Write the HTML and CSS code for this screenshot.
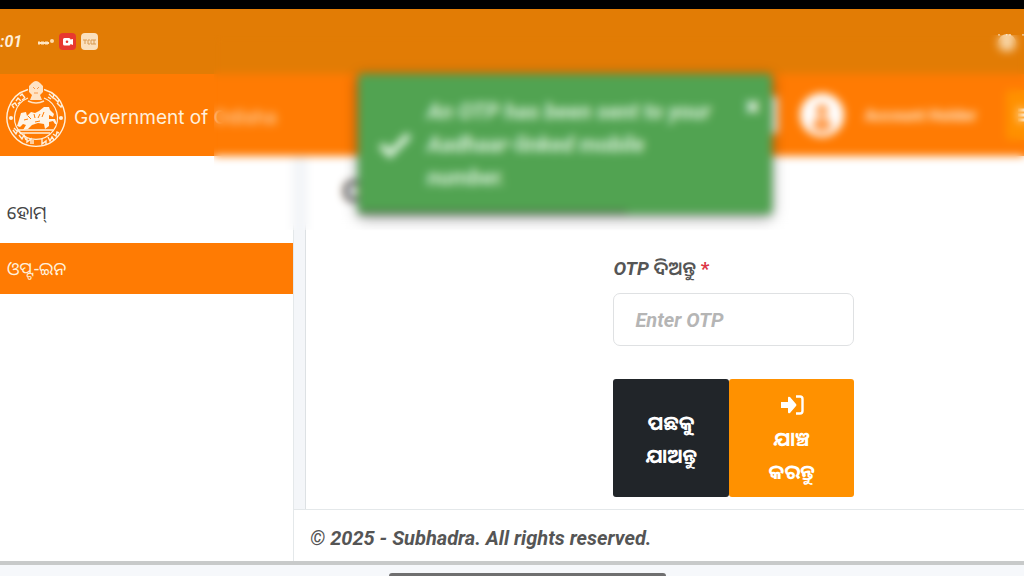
FILE: index.html
```html
<!DOCTYPE html>
<html lang="or">
<head>
    <meta charset="UTF-8">
    <meta name="viewport" content="width=device-width, initial-scale=1.0">
    <title>Subhadra</title>
    <link rel="stylesheet" href="styles.css">
</head>
<body>
    <!-- Phone status bar -->
    <div class="status-bar">
        <span class="clock">:01</span>
        <svg class="net" viewBox="0 0 17 10" width="17" height="10">
            <path d="M1 6h2M4 6h3M8 6h3" stroke="#ffe6c4" stroke-width="3"/>
            <path d="M1 6h11" stroke="#ffe6c4" stroke-width="2"/>
            <circle cx="15" cy="4" r="2" fill="#ffdcae"/>
        </svg>
        <span class="app-icon rec">
            <svg viewBox="0 0 10 8" width="10" height="8">
                <path d="M1.500 0h4.500a1.500 1.500 0 0 1 1.500 1.500L10 1v6L7.500 6A1.500 1.500 0 0 1 6 7.500H1.500A1.500 1.500 0 0 1 0 6V1.500A1.500 1.500 0 0 1 1.500 0z" fill="#fff"/>
                <circle cx="4" cy="3.800" r="1.300" fill="#e8382f"/>
            </svg>
        </span>
        <span class="app-icon count">
            <svg viewBox="0 0 13 6" width="13" height="6">
                <path d="M0 1h4M2 1v4M5 1v4M8 1v4M11 1v4M5 5h2M5 1h2M8 5h5M8 1h5" stroke="#d99a50" stroke-width="1" fill="none"/>
            </svg>
        </span>
        <svg class="signal" viewBox="0 0 28 18" width="28" height="18">
            <circle cx="11" cy="10" r="9" fill="#f8d4a4"/>
            <path d="M2 2h2M10 2h1M13 2h2M26 2h2" stroke="#fff" stroke-width="1"/>
        </svg>
    </div>

    <!-- Site header -->
    <header class="header">
        <svg class="emblem" viewBox="0 0 60 68" width="60" height="68">
            <g fill="none" stroke="#fff0dc">
                <path d="M22 8.500A29 29 0 1 0 38 8.500" stroke-width="1.400"/>
                <path d="M22 17A21.500 21.500 0 1 0 38 17" stroke-width="1.200"/>
                <path d="M8 27l-2-3 3-2 2 3M10 20l2-3 3 3M14 15l2-2 3 4M16 19l3-2M12 23l2-2" stroke-width="1.400"/>
                <path d="M43 13l4 4 1-4M48 17l4 4 1-3M51 22l4 4 1-2M42 16l3 2" stroke-width="1.400"/>
                <path d="M7 49l3 4 2-4 3 4M13 54l3 4 2-4 2 5M21 57v4l4-3v5M27 59v4M8 47l3 3" stroke-width="1.400"/>
                <path d="M36 58v5l4-3v3M42 56l2 4 2-4 2 3M47 53l3 2 1-4 2 1" stroke-width="1.400"/>
            </g>
            <circle cx="5" cy="37" r="2" fill="#fff0dc"/>
            <circle cx="55" cy="37" r="2" fill="#fff0dc"/>
            <path d="M26 2q4-4 8 0l3 3v6l-3 3 2 5H24l2-5-3-3V5z" fill="#ffe3c4"/>
            <path d="M27 6l2 2M33 6l-2 2M28 12h4" stroke="#f79a4a" fill="none"/>
            <path d="M22 20q8 4 16 0" stroke="#ffe3c4" stroke-width="1.500" fill="none"/>
            <path d="M15 32l5-1 1 4 4-4 4 1 4-2 5-4 5 0 1 3 4 4-1 3-4-2 0 4 6 0 2 5-2 0-2-3-4 1 0 4-4 3-1-5-6-1-6 2-4 4-5 1 3-5-3-1-3 3-3-1 2-6z" fill="#fff4e6"/>
            <path d="M22 35l3 3M28 33l1 4M34 33l-2 4M18 39l4-1M38 31l-2 5M29 41l5-1" stroke="#ff7b03" fill="none"/>
            <path d="M12 49h35M15 52h29" stroke="#fff0dc" stroke-width="1.500"/>
        </svg>
        <span class="brand">Government of <b>Odisha</b></span>
        <div class="header-right">
            <button class="lang" type="button" aria-label="Language"></button>
            <svg class="avatar" viewBox="0 0 44 44" width="44" height="44">
                <circle cx="22" cy="22" r="22" fill="#fff"/>
                <circle cx="22" cy="17" r="6" fill="#ff9b4b"/>
                <path d="M12 34q2-10 10-10t10 10q-5 5-10 5t-10-5z" fill="#ff9b4b"/>
            </svg>
            <span class="user">Account Holder</span>
            <button class="more" type="button" aria-label="Menu">
                <svg viewBox="0 0 6 14" width="6" height="14"><path d="M0 2h6M0 7h6M0 12h6" stroke="#fff" stroke-width="3"/></svg>
            </button>
        </div>
    </header>

    <!-- Sidebar, form and footer -->
    <div class="wrapper">
        <nav class="sidebar">
            <a href="#">ହୋମ୍</a>
            <a href="#" class="active">ଓପ୍ଟ-ଇନ</a>
        </nav>
        <div class="page">
            <main class="content">
                <h1>OTP</h1>
                <form class="otp-form">
                    <label for="otp"><i>OTP</i> ଦିଅନ୍ତୁ <span class="required">*</span></label>
                    <input type="text" id="otp" placeholder="Enter OTP">
                    <div class="buttons">
                        <button type="button" class="btn back">ପଛକୁ ଯାଅନ୍ତୁ</button>
                        <button type="submit" class="btn verify">
                            <svg viewBox="0 0 24 20" width="24" height="20">
                                <path d="M1 7h7V3q0-2 2-1l6 7q1 1 0 2l-6 7q-2 1-2-1v-4H1z" fill="#fff"/>
                                <path d="M16 1.500h4a2.500 2.500 0 0 1 2.500 2.500v12a2.500 2.500 0 0 1-2.500 2.500h-4" fill="none" stroke="#fff" stroke-width="2.400"/>
                            </svg>
                            <span>ଯାଞ୍ଚ କରନ୍ତୁ</span>
                        </button>
                    </div>
                </form>
            </main>
            <footer class="footer">© 2025 - Subhadra. All rights reserved.</footer>
        </div>
    </div>

    <!-- Navigation handle -->
    <div class="nav-area"><div class="handle"></div></div>

    <div class="toast" role="alert">
        <svg class="check" viewBox="0 0 34 28" width="34" height="28">
            <path d="M3 14l9 9L31 4" fill="none" stroke="#d8efd8" stroke-width="7"/>
        </svg>
        <p>An OTP has been sent to your Aadhaar-linked mobile number.</p>
        <button type="button" class="close" aria-label="Close">×</button>
        <div class="progress"></div>
    </div>

    <!-- Hides the private details -->
    <div class="privacy-blur"></div>
</body>
</html>
```
FILE: styles.css
```css
* {
    box-sizing: border-box;
}
body {
    font-family: Roboto, "Noto Sans Oriya", "Noto Sans", sans-serif;
    margin: 0;
    min-height: 100vh;
    display: flex;
    flex-direction: column;
    position: relative;
    overflow: hidden;
    color: #555;
    background: #fff;
}
button, input {
    font: inherit;
}

/* Status bar */
.status-bar {
    height: 74px;
    border-top: 9px solid #000;
    background: #e27c05;
    display: flex;
    align-items: center;
    gap: 5px;
}
.clock {
    width: 32px;
    font-size: 16px;
    font-weight: bold;
    font-style: italic;
    color: #ffeed8;
}
.app-icon {
    width: 17px;
    height: 17px;
    border-radius: 4px;
    display: flex;
    align-items: center;
    justify-content: center;
}
.rec {
    background: #e8382f;
}
.count {
    background: #fbe0bd;
}
.signal {
    margin-left: auto;
}

/* Header */
.header {
    height: 82px;
    background: #ff7b03;
    display: flex;
    align-items: center;
    padding-left: 6px;
    overflow: hidden;
}
.brand {
    margin-left: 8px;
    padding-top: 4px;
    font-family: Inter, sans-serif;
    font-size: 19px;
    color: #fff0dc;
    white-space: nowrap;
}
.brand b {
    font-weight: 500;
    color: #ffd0a0;
}
.header-right {
    margin-left: auto;
    display: flex;
    align-items: center;
    flex-shrink: 0;
    color: #fff;
}
.lang {
    width: 60px;
    height: 38px;
    border: 0;
    border-radius: 4px;
    background: #fff;
}
.avatar {
    margin: 0 21px 0 22px;
}
.user {
    width: 141px;
    font-size: 16px;
    font-weight: bold;
    color: #ffe6cc;
    white-space: nowrap;
}
.more {
    width: 18px;
    height: 50px;
    padding: 0;
    border: 0;
    border-radius: 4px 0 0 4px;
    background: #ff9100;
    display: flex;
    align-items: center;
    justify-content: flex-end;
}

/* Sidebar */
.wrapper {
    flex: 1;
    display: flex;
}
.sidebar {
    width: 293px;
    padding-top: 31px;
    flex-shrink: 0;
}
.sidebar a {
    display: block;
    height: 51px;
    margin-bottom: 5px;
    padding-left: 7px;
    font-size: 18px;
    line-height: 51px;
    color: #444;
    text-decoration: none;
}
.sidebar a.active {
    background: #ff7b03;
    color: #fff0dc;
}

/* Page */
.page {
    flex: 1;
    display: flex;
    flex-direction: column;
    border-left: 1px solid #e4e8ea;
    font-weight: bold;
}
.content {
    flex: 1;
    margin-left: 11px;
    border-left: 1px solid #dde1e4;
    box-shadow: -11px 0 0 #f4f6f9;
    padding: 16px 20px 12px 36px;
}
.content h1 {
    margin: 0;
    font-size: 32px;
    line-height: 38px;
    color: #444;
}
.otp-form {
    width: 241px;
    margin-top: 42px;
    margin-left: 41%;
}
.otp-form label {
    display: block;
    font-size: 19px;
    line-height: 34px;
    font-weight: 600;
}
.otp-form label i {
    font-weight: bold;
}
.required {
    color: #dc3545;
    font-weight: bold;
}
.otp-form input {
    display: block;
    width: 100%;
    height: 53px;
    margin: 7px 0 33px;
    padding: 0 21px;
    border: 1px solid #dfe1e3;
    border-radius: 7px;
    font-size: 20px;
    font-style: italic;
}
.otp-form input::placeholder {
    color: #b5b5b5;
}
.buttons {
    display: flex;
}
.btn {
    height: 118px;
    border: 0;
    border-radius: 3px;
    font-size: 20px;
    line-height: 33px;
    color: #fff;
}
.back {
    width: 48%;
    padding: 4px 24px 0;
    background: #212529;
}
.verify {
    width: 52%;
    padding: 16px 28px 8px;
    background: #ff9100;
    display: flex;
    flex-direction: column;
    align-items: center;
    gap: 8px;
}
.footer {
    height: 52px;
    padding-left: 16px;
    border-top: 1px solid #e4e8ea;
    font-size: 20px;
    line-height: 56px;
    font-style: italic;
}

/* Bottom strip */
.nav-area {
    height: 15px;
    border-top: 4px solid #c8caca;
    background: #f6f8fb;
    display: flex;
    align-items: flex-end;
}
.handle {
    width: 27%;
    height: 3px;
    margin-left: 38%;
    border-radius: 3px 3px 0 0;
    background: #6f6f70;
}

/* Toast */
.toast {
    position: absolute;
    top: 74px;
    left: 358px;
    width: 414px;
    padding: 21px 12px 20px 20px;
    display: flex;
    align-items: center;
    border-radius: 4px;
    background: #51a351;
    box-shadow: 0 3px 12px rgba(0, 0, 0, 0.5);
    color: #fff;
    overflow: hidden;
}
.check {
    flex-shrink: 0;
}
.toast p {
    flex: 1;
    margin: 0 0 0 15px;
    padding-right: 24px;
    font-size: 22px;
    line-height: 33px;
    font-weight: bold;
    font-style: italic;
    color: #d8efd8;
}
.close {
    align-self: flex-start;
    padding: 0;
    border: 0;
    background: none;
    color: #fff;
    font-size: 28px;
    font-weight: bold;
    line-height: 24px;
}
.progress {
    position: absolute;
    left: 0;
    bottom: 0;
    width: 65%;
    height: 4px;
    background: #4a7a45;
}
.privacy-blur {
    position: absolute;
    top: 35px;
    left: 214px;
    right: 0;
    height: 195px;
    backdrop-filter: blur(4px);
}
```
